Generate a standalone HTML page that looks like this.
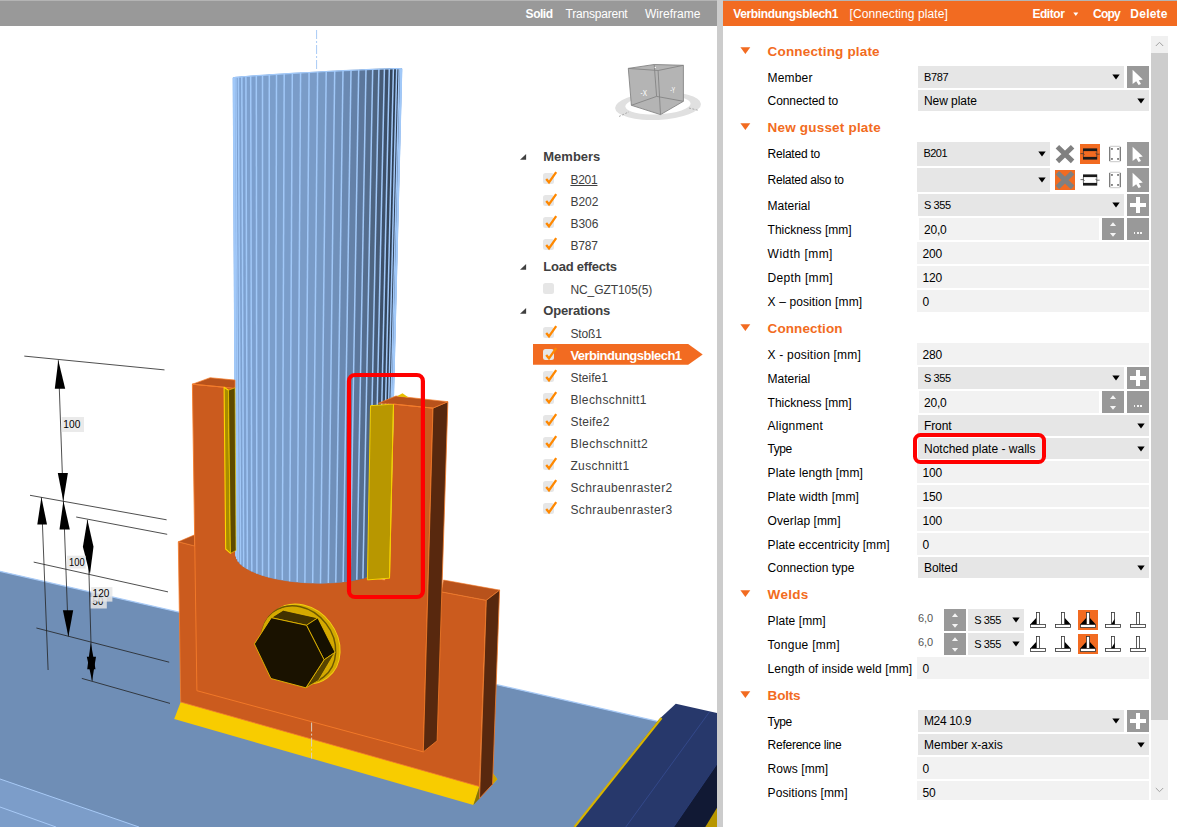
<!DOCTYPE html>
<html lang="en"><head><meta charset="utf-8"><title>Verbindungsblech1 - Connecting plate</title>
<style>
html,body{margin:0;padding:0;background:#fff;}
body{width:1177px;height:827px;position:relative;overflow:hidden;font-family:"Liberation Sans",sans-serif;}
.r{position:absolute;display:block;}
.t{position:absolute;white-space:nowrap;line-height:1;}
.scene{position:absolute;left:0;top:0;}
</style></head><body>
<svg class="scene" width="717" height="827" viewBox="0 0 717 827">
<polygon points="0.0,571.3 665.0,723.1 665.0,827.0 0.0,827.0" fill="#6f8eb6" />
<line x1="0.0" y1="571.3" x2="661.0" y2="722.1" stroke="#a8caf6" stroke-width="1.2" />
<polygon points="0.0,779.0 139.0,827.0 0.0,827.0" fill="#7c9dc9" />
<line x1="0.0" y1="779.0" x2="139.0" y2="827.0" stroke="#a8caf6" stroke-width="1" />
<line x1="0.0" y1="807.0" x2="56.0" y2="827.0" stroke="#a8caf6" stroke-width="1" />
<polygon points="675.8,703.8 717.0,713.0 717.0,827.0 573.8,827.0 659.4,719.1" fill="#27386b" />
<polygon points="717.0,764.0 717.0,827.0 673.7,827.0" fill="#111934" />
<polygon points="717.0,807.8 717.0,827.0 705.3,827.0" fill="#b89600" />
<line x1="709.4" y1="712.0" x2="625.8" y2="827.0" stroke="#33488a" stroke-width="1" />
<line x1="661.5" y1="718.0" x2="574.5" y2="827.0" stroke="#d8b400" stroke-width="2.2" />
<line x1="717.0" y1="764.0" x2="673.7" y2="827.0" stroke="#2c3f78" stroke-width="0.8" />
<polygon points="180.7,702.0 479.1,786.3 492.6,784.2 497.3,779.2 492.6,773.1 480.0,780.0" fill="#f8cc00" />
<polygon points="180.7,702.0 479.6,786.4 473.4,805.1 174.2,719.0" fill="#f8cc00" />
<polygon points="492.6,773.1 497.3,779.2 492.6,784.2" fill="#c9a400" />
<polygon points="479.3,786.5 473.4,805.1 479.5,798.4" fill="#8a7200" />
<polygon points="178.3,541.8 195.0,546.0 441.3,591.8 486.3,600.3 479.3,786.5 180.7,702.0" fill="#cb5b1e" stroke="#f57c2a" stroke-width="0.8" stroke-linejoin="round" />
<polygon points="178.3,541.8 194.6,534.8 194.6,545.9" fill="#b8521b" stroke="#f57c2a" stroke-width="0.6" stroke-linejoin="round" />
<polygon points="443.5,580.0 499.6,590.1 486.3,600.3 441.3,591.8" fill="#b8521b" stroke="#f57c2a" stroke-width="0.6" stroke-linejoin="round" />
<polygon points="486.3,600.3 499.6,590.1 492.6,784.2 479.5,798.4" fill="#58280e" stroke="#f57c2a" stroke-width="0.8" stroke-linejoin="round" />
<polygon points="192.4,384.2 240.0,388.7 240.0,560.0 385.0,580.0 385.0,404.6 393.5,404.1 433.0,408.1 423.3,751.9 196.9,690.7" fill="#cb5b1e" stroke="#f57c2a" stroke-width="0.9" stroke-linejoin="round" />
<polygon points="433.0,408.1 447.9,401.7 437.1,740.8 423.3,751.9" fill="#58280e" stroke="#f57c2a" stroke-width="0.8" stroke-linejoin="round" />
<polygon points="233.4,77.8 233.5,77.7 234.3,77.6 235.9,77.3 238.4,77.1 241.8,76.8 245.9,76.5 250.7,76.1 256.3,75.7 262.5,75.3 269.3,74.8 276.5,74.4 284.2,73.9 292.3,73.4 300.6,72.9 309.1,72.5 317.6,72.0 326.2,71.5 334.7,71.1 343.0,70.7 351.0,70.3 358.7,70.0 366.0,69.6 372.7,69.4 378.9,69.1 384.4,68.9 389.3,68.8 393.4,68.7 396.7,68.6 399.2,68.6 400.8,68.7 401.5,68.8 401.6,68.8 389.2,560.0 389.1,560.9 388.5,563.5 387.0,566.0 384.7,568.4 381.7,570.7 378.0,572.9 373.6,574.9 368.5,576.7 362.9,578.4 356.8,579.8 350.1,581.0 343.1,581.9 335.8,582.6 328.3,583.0 320.5,583.2 312.7,583.1 304.9,582.7 297.2,582.1 289.6,581.2 282.3,580.1 275.3,578.8 268.7,577.2 262.5,575.4 256.9,573.4 251.8,571.3 247.4,569.1 243.6,566.7 240.6,564.2 238.3,561.6 236.8,559.0 236.1,556.4 236.0,555.4" fill="#799bc7" />
<polygon points="233.4,77.8 233.5,77.7 236.1,556.4 236.0,555.4" fill="#7fa3d3" stroke="#7fa3d3" stroke-width="0.6" stroke-linejoin="round" />
<polygon points="233.5,77.7 234.3,77.6 236.8,559.0 236.1,556.4" fill="#7fa2d2" stroke="#7fa2d2" stroke-width="0.6" stroke-linejoin="round" />
<polygon points="234.3,77.6 235.9,77.3 238.3,561.6 236.8,559.0" fill="#7ea2d2" stroke="#7ea2d2" stroke-width="0.6" stroke-linejoin="round" />
<polygon points="235.9,77.3 238.4,77.1 240.6,564.2 238.3,561.6" fill="#7ea1d1" stroke="#7ea1d1" stroke-width="0.6" stroke-linejoin="round" />
<polygon points="238.4,77.1 241.8,76.8 243.6,566.7 240.6,564.2" fill="#7da1d0" stroke="#7da1d0" stroke-width="0.6" stroke-linejoin="round" />
<polygon points="241.8,76.8 245.9,76.5 247.4,569.1 243.6,566.7" fill="#7da0cf" stroke="#7da0cf" stroke-width="0.6" stroke-linejoin="round" />
<polygon points="245.9,76.5 250.7,76.1 251.8,571.3 247.4,569.1" fill="#7da0ce" stroke="#7da0ce" stroke-width="0.6" stroke-linejoin="round" />
<polygon points="250.7,76.1 256.3,75.7 256.9,573.4 251.8,571.3" fill="#7c9fce" stroke="#7c9fce" stroke-width="0.6" stroke-linejoin="round" />
<polygon points="256.3,75.7 262.5,75.3 262.5,575.4 256.9,573.4" fill="#7c9fcd" stroke="#7c9fcd" stroke-width="0.6" stroke-linejoin="round" />
<polygon points="262.5,75.3 269.3,74.8 268.7,577.2 262.5,575.4" fill="#7c9fcc" stroke="#7c9fcc" stroke-width="0.6" stroke-linejoin="round" />
<polygon points="269.3,74.8 276.5,74.4 275.3,578.8 268.7,577.2" fill="#7b9ecb" stroke="#7b9ecb" stroke-width="0.6" stroke-linejoin="round" />
<polygon points="276.5,74.4 284.2,73.9 282.3,580.1 275.3,578.8" fill="#7b9eca" stroke="#7b9eca" stroke-width="0.6" stroke-linejoin="round" />
<polygon points="284.2,73.9 292.3,73.4 289.6,581.2 282.3,580.1" fill="#7a9dca" stroke="#7a9dca" stroke-width="0.6" stroke-linejoin="round" />
<polygon points="292.3,73.4 300.6,72.9 297.2,582.1 289.6,581.2" fill="#7a9cc9" stroke="#7a9cc9" stroke-width="0.6" stroke-linejoin="round" />
<polygon points="300.6,72.9 309.1,72.5 304.9,582.7 297.2,582.1" fill="#7a9cc8" stroke="#7a9cc8" stroke-width="0.6" stroke-linejoin="round" />
<polygon points="309.1,72.5 317.6,72.0 312.7,583.1 304.9,582.7" fill="#799bc7" stroke="#799bc7" stroke-width="0.6" stroke-linejoin="round" />
<polygon points="317.6,72.0 326.2,71.5 320.5,583.2 312.7,583.1" fill="#7799c4" stroke="#7799c4" stroke-width="0.6" stroke-linejoin="round" />
<polygon points="326.2,71.5 334.7,71.1 328.3,583.0 320.5,583.2" fill="#7494bf" stroke="#7494bf" stroke-width="0.6" stroke-linejoin="round" />
<polygon points="334.7,71.1 343.0,70.7 335.8,582.6 328.3,583.0" fill="#7090ba" stroke="#7090ba" stroke-width="0.6" stroke-linejoin="round" />
<polygon points="343.0,70.7 351.0,70.3 343.1,581.9 335.8,582.6" fill="#6a89b2" stroke="#6a89b2" stroke-width="0.6" stroke-linejoin="round" />
<polygon points="351.0,70.3 358.7,70.0 350.1,581.0 343.1,581.9" fill="#6481a8" stroke="#6481a8" stroke-width="0.6" stroke-linejoin="round" />
<polygon points="358.7,70.0 366.0,69.6 356.8,579.8 350.1,581.0" fill="#5c779c" stroke="#5c779c" stroke-width="0.6" stroke-linejoin="round" />
<polygon points="366.0,69.6 372.7,69.4 362.9,578.4 356.8,579.8" fill="#556e8f" stroke="#556e8f" stroke-width="0.6" stroke-linejoin="round" />
<polygon points="372.7,69.4 378.9,69.1 368.5,576.7 362.9,578.4" fill="#4e6582" stroke="#4e6582" stroke-width="0.6" stroke-linejoin="round" />
<polygon points="378.9,69.1 384.4,68.9 373.6,574.9 368.5,576.7" fill="#465b77" stroke="#465b77" stroke-width="0.6" stroke-linejoin="round" />
<polygon points="384.4,68.9 389.3,68.8 378.0,572.9 373.6,574.9" fill="#3d506a" stroke="#3d506a" stroke-width="0.6" stroke-linejoin="round" />
<polygon points="389.3,68.8 393.4,68.7 381.7,570.7 378.0,572.9" fill="#34465d" stroke="#34465d" stroke-width="0.6" stroke-linejoin="round" />
<polygon points="393.4,68.7 396.7,68.6 384.7,568.4 381.7,570.7" fill="#2d3d52" stroke="#2d3d52" stroke-width="0.6" stroke-linejoin="round" />
<polygon points="396.7,68.6 399.2,68.6 387.0,566.0 384.7,568.4" fill="#2d3b50" stroke="#2d3b50" stroke-width="0.6" stroke-linejoin="round" />
<polygon points="399.2,68.6 400.8,68.7 388.5,563.5 387.0,566.0" fill="#3a4b65" stroke="#3a4b65" stroke-width="0.6" stroke-linejoin="round" />
<polygon points="400.8,68.7 401.5,68.8 389.1,560.9 388.5,563.5" fill="#5a7295" stroke="#5a7295" stroke-width="0.6" stroke-linejoin="round" />
<polygon points="401.5,68.8 401.6,68.8 389.2,560.0 389.1,560.9" fill="#7290ba" stroke="#7290ba" stroke-width="0.6" stroke-linejoin="round" />
<line x1="233.4" y1="77.8" x2="236.0" y2="555.4" stroke="#a1c8f8" stroke-width="1.5" />
<line x1="233.5" y1="77.7" x2="236.1" y2="556.4" stroke="#a1c8f8" stroke-width="1.5" />
<line x1="234.3" y1="77.6" x2="236.8" y2="559.0" stroke="#a1c8f8" stroke-width="1.5" />
<line x1="235.9" y1="77.3" x2="238.3" y2="561.6" stroke="#a1c8f8" stroke-width="1.5" />
<line x1="238.4" y1="77.1" x2="240.6" y2="564.2" stroke="#a1c8f8" stroke-width="1.5" />
<line x1="241.8" y1="76.8" x2="243.6" y2="566.7" stroke="#a1c8f8" stroke-width="1.5" />
<line x1="245.9" y1="76.5" x2="247.4" y2="569.1" stroke="#a1c8f8" stroke-width="1.5" />
<line x1="250.7" y1="76.1" x2="251.8" y2="571.3" stroke="#a1c8f8" stroke-width="1.5" />
<line x1="256.3" y1="75.7" x2="256.9" y2="573.4" stroke="#a1c8f8" stroke-width="1.5" />
<line x1="262.5" y1="75.3" x2="262.5" y2="575.4" stroke="#a1c8f8" stroke-width="1.5" />
<line x1="269.3" y1="74.8" x2="268.7" y2="577.2" stroke="#a1c8f8" stroke-width="1.5" />
<line x1="276.5" y1="74.4" x2="275.3" y2="578.8" stroke="#a1c8f8" stroke-width="1.5" />
<line x1="284.2" y1="73.9" x2="282.3" y2="580.1" stroke="#a1c8f8" stroke-width="1.5" />
<line x1="292.3" y1="73.4" x2="289.6" y2="581.2" stroke="#a1c8f8" stroke-width="1.5" />
<line x1="300.6" y1="72.9" x2="297.2" y2="582.1" stroke="#a1c8f8" stroke-width="1.5" />
<line x1="309.1" y1="72.5" x2="304.9" y2="582.7" stroke="#a1c8f8" stroke-width="1.5" />
<line x1="317.6" y1="72.0" x2="312.7" y2="583.1" stroke="#a1c8f8" stroke-width="1.5" />
<line x1="326.2" y1="71.5" x2="320.5" y2="583.2" stroke="#a1c8f8" stroke-width="1.5" />
<line x1="334.7" y1="71.1" x2="328.3" y2="583.0" stroke="#a1c8f8" stroke-width="1.5" />
<line x1="343.0" y1="70.7" x2="335.8" y2="582.6" stroke="#a1c8f8" stroke-width="1.5" />
<line x1="351.0" y1="70.3" x2="343.1" y2="581.9" stroke="#a1c8f8" stroke-width="1.5" />
<line x1="358.7" y1="70.0" x2="350.1" y2="581.0" stroke="#a1c8f8" stroke-width="1.5" />
<line x1="366.0" y1="69.6" x2="356.8" y2="579.8" stroke="#a1c8f8" stroke-width="1.5" />
<line x1="372.7" y1="69.4" x2="362.9" y2="578.4" stroke="#a1c8f8" stroke-width="1.5" />
<line x1="378.9" y1="69.1" x2="368.5" y2="576.7" stroke="#a1c8f8" stroke-width="1.5" />
<line x1="384.4" y1="68.9" x2="373.6" y2="574.9" stroke="#a1c8f8" stroke-width="1.5" />
<line x1="389.3" y1="68.8" x2="378.0" y2="572.9" stroke="#a1c8f8" stroke-width="1.5" />
<line x1="393.4" y1="68.7" x2="381.7" y2="570.7" stroke="#a1c8f8" stroke-width="1.5" />
<line x1="396.7" y1="68.6" x2="384.7" y2="568.4" stroke="#a1c8f8" stroke-width="1.5" />
<line x1="399.2" y1="68.6" x2="387.0" y2="566.0" stroke="#a1c8f8" stroke-width="1.5" />
<line x1="400.8" y1="68.7" x2="388.5" y2="563.5" stroke="#a1c8f8" stroke-width="1.5" />
<line x1="401.5" y1="68.8" x2="389.1" y2="560.9" stroke="#a1c8f8" stroke-width="1.5" />
<line x1="401.6" y1="68.8" x2="389.2" y2="560.0" stroke="#a1c8f8" stroke-width="1.5" />
<polyline points="233.4,77.8 233.5,77.7 234.3,77.6 235.9,77.3 238.4,77.1 241.8,76.8 245.9,76.5 250.7,76.1 256.3,75.7 262.5,75.3 269.3,74.8 276.5,74.4 284.2,73.9 292.3,73.4 300.6,72.9 309.1,72.5 317.6,72.0 326.2,71.5 334.7,71.1 343.0,70.7 351.0,70.3 358.7,70.0 366.0,69.6 372.7,69.4 378.9,69.1 384.4,68.9 389.3,68.8 393.4,68.7 396.7,68.6 399.2,68.6 400.8,68.7 401.5,68.8 401.6,68.8" fill="none" stroke="#a1c8f8" stroke-width="1.2"/>
<polygon points="192.4,384.2 210.1,377.7 235.0,380.1 235.0,388.3 224.1,387.2" fill="#b8521b" stroke="#f57c2a" stroke-width="0.7" stroke-linejoin="round" />
<line x1="192.4" y1="384.2" x2="224.1" y2="387.2" stroke="#f57c2a" stroke-width="1" />
<polygon points="224.1,387.2 228.5,390.2 230.5,553.3 225.7,549.0" fill="#a88c00" stroke="#ffd400" stroke-width="1.1" stroke-linejoin="round" />
<polygon points="228.5,390.2 235.0,387.8 236.0,550.5 230.5,553.3" fill="#5e4a00" stroke="#f4d000" stroke-width="0.6" stroke-linejoin="round" />
<polygon points="370.5,405.7 393.5,404.1 389.5,578.2 367.4,579.9" fill="#b89700" stroke="#f4d000" stroke-width="1" stroke-linejoin="round" />
<polygon points="378.4,403.3 395.9,396.0 447.9,401.7 433.0,408.1 393.5,404.1" fill="#b8521b" stroke="#f57c2a" stroke-width="0.7" stroke-linejoin="round" />
<polygon points="397.0,396.3 402.5,393.2 408.6,397.5" fill="#e8c000" />
<line x1="393.5" y1="404.1" x2="433.0" y2="408.1" stroke="#f57c2a" stroke-width="1" />
<line x1="393.5" y1="404.1" x2="389.5" y2="578.2" stroke="#f4d000" stroke-width="1" />
<ellipse cx="301.9" cy="644" rx="42.4" ry="35.5" transform="rotate(52.6 301.9 644)" fill="#d4a900" stroke="#f2d010" stroke-width="1"/>
<ellipse cx="298.6" cy="644.6" rx="41" ry="34.6" transform="rotate(52.6 298.6 644.6)" fill="#d4a900" stroke="#6e5800" stroke-width="1.5"/>
<ellipse cx="297" cy="644.8" rx="40" ry="33.6" transform="rotate(52.6 297 644.8)" fill="#d4a900"/>
<polygon points="271.3,617.7 283.2,610.2 317.8,617.9 306.5,625.3" fill="#423200" stroke="#e4b800" stroke-width="0.8" stroke-linejoin="round" />
<polygon points="306.5,625.3 317.8,617.9 335.1,652.3 324.1,659.8" fill="#151000" stroke="#e4b800" stroke-width="0.8" stroke-linejoin="round" />
<polygon points="324.1,659.8 335.1,652.3 318.5,680.5 305.9,687.8" fill="#574400" stroke="#e4b800" stroke-width="0.8" stroke-linejoin="round" />
<polygon points="254.4,643.9 271.3,617.7 306.5,625.3 324.1,659.8 305.9,687.8 270.9,678.5" fill="#1a1200" stroke="#e4b800" stroke-width="0.9" stroke-linejoin="round" />
<line x1="316.6" y1="30.0" x2="316.6" y2="71.0" stroke="#a8caf6" stroke-width="1" stroke-dasharray="9 2 2 2"/>
<line x1="311.6" y1="722.6" x2="311.6" y2="758.6" stroke="#d8d0c0" stroke-width="1" stroke-dasharray="9 2 2 2"/>
<rect x="349" y="375" width="73.9" height="222" rx="6" ry="6" fill="none" stroke="#ff0000" stroke-width="4.2"/>
<line x1="24.3" y1="356.1" x2="164.5" y2="369.9" stroke="#222" stroke-width="0.8" />
<line x1="30.0" y1="495.3" x2="166.6" y2="519.8" stroke="#222" stroke-width="0.8" />
<line x1="76.2" y1="517.0" x2="167.2" y2="534.3" stroke="#222" stroke-width="0.8" />
<line x1="33.7" y1="562.1" x2="168.0" y2="591.9" stroke="#222" stroke-width="0.8" />
<line x1="36.4" y1="628.0" x2="169.2" y2="662.2" stroke="#222" stroke-width="0.8" />
<line x1="81.8" y1="678.4" x2="170.0" y2="703.4" stroke="#222" stroke-width="0.8" />
<line x1="58.3" y1="360.2" x2="63.3" y2="500.9" stroke="#222" stroke-width="0.8" />
<line x1="41.4" y1="497.3" x2="48.1" y2="670.0" stroke="#222" stroke-width="0.8" />
<line x1="63.4" y1="500.9" x2="68.4" y2="636.4" stroke="#222" stroke-width="0.8" />
<line x1="87.4" y1="519.8" x2="92.1" y2="680.9" stroke="#222" stroke-width="0.8" />
<polygon points="58.3,360.2 54.8,388.7 65.2,388.7" fill="#000" />
<polygon points="63.3,500.9 57.8,472.9 67.9,472.9" fill="#000" />
<polygon points="41.4,497.3 37.3,524.5 47.0,524.5" fill="#000" />
<polygon points="63.4,500.9 59.5,529.5 69.8,529.5" fill="#000" />
<polygon points="68.4,636.4 62.9,610.2 73.2,610.2" fill="#000" />
<polygon points="87.4,519.8 82.9,546.8 89.9,574.6 93.5,546.8" fill="#000" />
<polygon points="90.8,642.8 87.2,669.2 95.5,669.2" fill="#000" />
<polygon points="92.1,680.9 86.8,656.7 96.0,656.7" fill="#000" />
<rect x="61.7" y="417" width="22.3" height="15" fill="#e6e6e6" fill-opacity="0.85"/>
<text x="63.3" y="428" font-family="Liberation Sans, sans-serif" font-size="11" fill="#000" textLength="17" lengthAdjust="spacingAndGlyphs">100</text>
<rect x="67" y="555.7" width="18.7" height="12.8" fill="#e6e6e6" fill-opacity="0.85"/>
<text x="69" y="565.7" font-family="Liberation Sans, sans-serif" font-size="11" fill="#000" textLength="15.6" lengthAdjust="spacingAndGlyphs">100</text>
<rect x="90.7" y="596.9" width="16.1" height="11.6" fill="#e6e6e6" fill-opacity="0.85"/>
<text x="92.6" y="604.7" font-family="Liberation Sans, sans-serif" font-size="11" fill="#000" textLength="10.6" lengthAdjust="spacingAndGlyphs">50</text>
<rect x="91.2" y="587.1" width="21.2" height="14.5" fill="#e6e6e6" fill-opacity="0.85"/>
<text x="92.6" y="597.4" font-family="Liberation Sans, sans-serif" font-size="11" fill="#000" textLength="16.7" lengthAdjust="spacingAndGlyphs">120</text>
<path transform="rotate(-2.8 658 106)" fill-rule="evenodd" fill="#e0e0e0" d="M615,106 a43,13.9 0 1,0 86,0 a43,13.9 0 1,0 -86,0 Z M625.3,105 a32.7,9.4 0 1,0 65.4,0 a32.7,9.4 0 1,0 -65.4,0 Z"/>
<polygon points="628.3,68.4 654.2,64.5 683.4,65.3 683.4,101.3 660.5,114.6 631.4,105.3" fill="#b4b4b4" stroke="#858585" stroke-width="0.9" stroke-linejoin="round" />
<line x1="628.3" y1="68.4" x2="658.1" y2="70.5" stroke="#858585" stroke-width="0.9" />
<line x1="658.1" y1="70.5" x2="683.4" y2="65.3" stroke="#858585" stroke-width="0.9" />
<line x1="658.1" y1="70.5" x2="660.5" y2="114.6" stroke="#858585" stroke-width="0.9" />
<line x1="654.2" y1="64.5" x2="656.6" y2="96.4" stroke="#858585" stroke-width="0.9" />
<line x1="656.6" y1="96.4" x2="631.4" y2="105.3" stroke="#858585" stroke-width="0.9" />
<line x1="656.6" y1="96.4" x2="683.4" y2="101.3" stroke="#858585" stroke-width="0.9" />
<text x="640.6" y="95.6" font-family="Liberation Sans, sans-serif" font-size="8.5" fill="#fff" textLength="6.4" lengthAdjust="spacingAndGlyphs">-X</text>
<text x="670.2" y="92.8" font-family="Liberation Sans, sans-serif" font-size="8.5" fill="#fff" textLength="5" lengthAdjust="spacingAndGlyphs">-Y</text>
<circle cx="655.3" cy="67.4" r="0.7" fill="#fff"/>
<line x1="619.0" y1="116.5" x2="629.0" y2="111.8" stroke="#999" stroke-width="0.8" stroke-dasharray="2 1.5"/>
<line x1="689.0" y1="108.0" x2="699.0" y2="110.5" stroke="#999" stroke-width="0.8" stroke-dasharray="2 1.5"/>
</svg>
<div class="r" style="left:0.0px;top:0.0px;width:717.0px;height:26.0px;background:#999999;"></div>
<div class="r" style="left:0.0px;top:0.0px;width:1177.0px;height:1.0px;background:#b4b4b4;"></div>
<div class="r" style="left:717.0px;top:0.0px;width:6.0px;height:827.0px;background:#cccccc;"></div>
<div class="r" style="left:723.0px;top:1.0px;width:454.0px;height:25.0px;background:#f26b21;"></div>
<svg class="r" style="left:1073.0px;top:12.0px" width="6" height="5" viewBox="0 0 6 5"><polygon points="0.3,0.5 5.3,0.5 2.8,4" fill="#fff"/></svg>
<svg class="r" style="left:520.0px;top:153.3px" width="7" height="7" viewBox="0 0 7 7"><polygon points="0,6.7 6.1,0.9 6.1,6.7" fill="#404040"/></svg>
<div class="r" style="left:543.2px;top:173.2px;width:10.8px;height:10.8px;background:#e6e6e6;border-radius:2.5px"></div>
<svg class="r" style="left:543.0px;top:171.1px" width="15" height="15" viewBox="0 0 15 15"><polyline points="3.2,7.9 6,11.3 13.2,1.1" fill="none" stroke="#ff8800" stroke-width="2.3" stroke-linejoin="miter"/></svg>
<div class="r" style="left:543.2px;top:195.2px;width:10.8px;height:10.8px;background:#e6e6e6;border-radius:2.5px"></div>
<svg class="r" style="left:543.0px;top:193.1px" width="15" height="15" viewBox="0 0 15 15"><polyline points="3.2,7.9 6,11.3 13.2,1.1" fill="none" stroke="#ff8800" stroke-width="2.3" stroke-linejoin="miter"/></svg>
<div class="r" style="left:543.2px;top:217.2px;width:10.8px;height:10.8px;background:#e6e6e6;border-radius:2.5px"></div>
<svg class="r" style="left:543.0px;top:215.1px" width="15" height="15" viewBox="0 0 15 15"><polyline points="3.2,7.9 6,11.3 13.2,1.1" fill="none" stroke="#ff8800" stroke-width="2.3" stroke-linejoin="miter"/></svg>
<div class="r" style="left:543.2px;top:239.2px;width:10.8px;height:10.8px;background:#e6e6e6;border-radius:2.5px"></div>
<svg class="r" style="left:543.0px;top:237.1px" width="15" height="15" viewBox="0 0 15 15"><polyline points="3.2,7.9 6,11.3 13.2,1.1" fill="none" stroke="#ff8800" stroke-width="2.3" stroke-linejoin="miter"/></svg>
<svg class="r" style="left:520.0px;top:263.2px" width="7" height="7" viewBox="0 0 7 7"><polygon points="0,6.7 6.1,0.9 6.1,6.7" fill="#404040"/></svg>
<div class="r" style="left:543.2px;top:283.2px;width:10.8px;height:10.8px;background:#e6e6e6;border-radius:2.5px"></div>
<svg class="r" style="left:520.0px;top:307.2px" width="7" height="7" viewBox="0 0 7 7"><polygon points="0,6.7 6.1,0.9 6.1,6.7" fill="#404040"/></svg>
<div class="r" style="left:543.2px;top:327.2px;width:10.8px;height:10.8px;background:#e6e6e6;border-radius:2.5px"></div>
<svg class="r" style="left:543.0px;top:325.1px" width="15" height="15" viewBox="0 0 15 15"><polyline points="3.2,7.9 6,11.3 13.2,1.1" fill="none" stroke="#ff8800" stroke-width="2.3" stroke-linejoin="miter"/></svg>
<svg class="r" style="left:532.8px;top:343.7px" width="170" height="21" viewBox="0 0 170 21"><polygon points="0,0 155.2,0 169.7,10.4 155.2,20.8 0,20.8" fill="#f26b21"/></svg>
<div class="r" style="left:543.2px;top:349.2px;width:10.8px;height:10.8px;background:#e6e6e6;border-radius:2.5px"></div>
<svg class="r" style="left:543.0px;top:347.1px" width="15" height="15" viewBox="0 0 15 15"><polyline points="3.2,7.9 6,11.3 13.2,1.1" fill="none" stroke="#ff8800" stroke-width="2.3" stroke-linejoin="miter"/></svg>
<div class="r" style="left:543.2px;top:371.2px;width:10.8px;height:10.8px;background:#e6e6e6;border-radius:2.5px"></div>
<svg class="r" style="left:543.0px;top:369.1px" width="15" height="15" viewBox="0 0 15 15"><polyline points="3.2,7.9 6,11.3 13.2,1.1" fill="none" stroke="#ff8800" stroke-width="2.3" stroke-linejoin="miter"/></svg>
<div class="r" style="left:543.2px;top:393.2px;width:10.8px;height:10.8px;background:#e6e6e6;border-radius:2.5px"></div>
<svg class="r" style="left:543.0px;top:391.1px" width="15" height="15" viewBox="0 0 15 15"><polyline points="3.2,7.9 6,11.3 13.2,1.1" fill="none" stroke="#ff8800" stroke-width="2.3" stroke-linejoin="miter"/></svg>
<div class="r" style="left:543.2px;top:415.2px;width:10.8px;height:10.8px;background:#e6e6e6;border-radius:2.5px"></div>
<svg class="r" style="left:543.0px;top:413.1px" width="15" height="15" viewBox="0 0 15 15"><polyline points="3.2,7.9 6,11.3 13.2,1.1" fill="none" stroke="#ff8800" stroke-width="2.3" stroke-linejoin="miter"/></svg>
<div class="r" style="left:543.2px;top:437.2px;width:10.8px;height:10.8px;background:#e6e6e6;border-radius:2.5px"></div>
<svg class="r" style="left:543.0px;top:435.1px" width="15" height="15" viewBox="0 0 15 15"><polyline points="3.2,7.9 6,11.3 13.2,1.1" fill="none" stroke="#ff8800" stroke-width="2.3" stroke-linejoin="miter"/></svg>
<div class="r" style="left:543.2px;top:459.2px;width:10.8px;height:10.8px;background:#e6e6e6;border-radius:2.5px"></div>
<svg class="r" style="left:543.0px;top:457.1px" width="15" height="15" viewBox="0 0 15 15"><polyline points="3.2,7.9 6,11.3 13.2,1.1" fill="none" stroke="#ff8800" stroke-width="2.3" stroke-linejoin="miter"/></svg>
<div class="r" style="left:543.2px;top:481.2px;width:10.8px;height:10.8px;background:#e6e6e6;border-radius:2.5px"></div>
<svg class="r" style="left:543.0px;top:479.1px" width="15" height="15" viewBox="0 0 15 15"><polyline points="3.2,7.9 6,11.3 13.2,1.1" fill="none" stroke="#ff8800" stroke-width="2.3" stroke-linejoin="miter"/></svg>
<div class="r" style="left:543.2px;top:503.2px;width:10.8px;height:10.8px;background:#e6e6e6;border-radius:2.5px"></div>
<svg class="r" style="left:543.0px;top:501.1px" width="15" height="15" viewBox="0 0 15 15"><polyline points="3.2,7.9 6,11.3 13.2,1.1" fill="none" stroke="#ff8800" stroke-width="2.3" stroke-linejoin="miter"/></svg>
<svg class="r" style="left:739.5px;top:46.9px" width="11" height="8" viewBox="0 0 11 8"><polygon points="0.4,0.2 10.3,0.2 5.35,7" fill="#f26b21"/></svg>
<div class="r" style="left:918.0px;top:66.0px;width:206.0px;height:22.0px;background:#e6e6e6;"></div>
<svg class="r" style="left:1111.6px;top:74.4px" width="8" height="6" viewBox="0 0 8 6"><polygon points="0.3,0.5 7.7,0.5 4,5.5" fill="#000"/></svg>
<div class="r" style="left:1127.0px;top:66.0px;width:22.0px;height:22.0px;background:#999999;"></div>
<svg class="r" style="left:1131.0px;top:68.0px" width="14" height="18" viewBox="0 0 14 18"><polygon points="1.6,1.7 1.6,15.9 5.2,13.2 7.6,17.1 10,15.9 7.8,12.3 11.8,11.4" fill="#fff"/></svg>
<div class="r" style="left:918.0px;top:90.0px;width:231.0px;height:21.0px;background:#e6e6e6;"></div>
<svg class="r" style="left:1136.6px;top:97.9px" width="8" height="6" viewBox="0 0 8 6"><polygon points="0.3,0.5 7.7,0.5 4,5.5" fill="#000"/></svg>
<svg class="r" style="left:739.5px;top:122.9px" width="11" height="8" viewBox="0 0 11 8"><polygon points="0.4,0.2 10.3,0.2 5.35,7" fill="#f26b21"/></svg>
<div class="r" style="left:917.0px;top:142.0px;width:133.0px;height:24.0px;background:#e6e6e6;"></div>
<svg class="r" style="left:1037.6px;top:151.3px" width="8" height="6" viewBox="0 0 8 6"><polygon points="0.3,0.5 7.7,0.5 4,5.5" fill="#000"/></svg>
<svg class="r" style="left:1055.0px;top:144.0px" width="20" height="20" viewBox="0 0 20 20"><path d="M2.4,2.7 L17.6,17.4 M17.6,2.7 L2.4,17.4" stroke="#808080" stroke-width="5" fill="none"/></svg>
<div class="r" style="left:1080.0px;top:144.0px;width:20.0px;height:20.0px;background:#f26b21;"></div>
<svg class="r" style="left:1080.0px;top:144.0px" width="20" height="20" viewBox="0 0 20 20"><rect x="3" y="4.4" width="14.2" height="2.7" fill="#1a1a1a"/><rect x="3" y="12.9" width="14.2" height="2.7" fill="#1a1a1a"/><path d="M0.5,9.6 H3.2 L4.6,10.6 M19.6,10.2 H17 L15.4,9.2 M3.4,7 V13 M16.8,7 V13" stroke="#333" stroke-width="0.7" fill="none"/></svg>
<svg class="r" style="left:1108.0px;top:144.8px" width="14" height="18" viewBox="0 0 14 18"><rect x="1.5" y="1.3" width="11" height="15.4" rx="1" fill="#fff" stroke="#b0b0b0" stroke-width="0.7"/><path d="M1.7,2 V16 M12.3,2 V16" stroke="#7a7a7a" stroke-width="1.3" fill="none"/><rect x="3.1" y="3.1" width="1.7" height="1.7" fill="#666"/><rect x="9.2" y="3.1" width="1.7" height="1.7" fill="#666"/><rect x="3.1" y="13.1" width="1.7" height="1.7" fill="#666"/><rect x="9.2" y="13.1" width="1.7" height="1.7" fill="#666"/></svg>
<div class="r" style="left:1127.0px;top:142.0px;width:22.0px;height:24.0px;background:#999999;"></div>
<svg class="r" style="left:1131.0px;top:145.0px" width="14" height="18" viewBox="0 0 14 18"><polygon points="1.6,1.7 1.6,15.9 5.2,13.2 7.6,17.1 10,15.9 7.8,12.3 11.8,11.4" fill="#fff"/></svg>
<div class="r" style="left:917.0px;top:168.0px;width:133.0px;height:24.0px;background:#e6e6e6;"></div>
<svg class="r" style="left:1037.6px;top:177.3px" width="8" height="6" viewBox="0 0 8 6"><polygon points="0.3,0.5 7.7,0.5 4,5.5" fill="#000"/></svg>
<div class="r" style="left:1055.0px;top:170.0px;width:20.0px;height:20.0px;background:#f26b21;"></div>
<svg class="r" style="left:1055.0px;top:170.0px" width="20" height="20" viewBox="0 0 20 20"><path d="M2.4,2.7 L17.6,17.4 M17.6,2.7 L2.4,17.4" stroke="#808080" stroke-width="5" fill="none"/></svg>
<svg class="r" style="left:1080.0px;top:170.0px" width="20" height="20" viewBox="0 0 20 20"><rect x="3" y="4.6" width="14.2" height="11" fill="#fff"/><rect x="3" y="4.4" width="14.2" height="2.7" fill="#1a1a1a"/><rect x="3" y="12.9" width="14.2" height="2.7" fill="#1a1a1a"/><path d="M0.5,9.6 H3.2 L4.6,10.6 M19.6,10.2 H17 L15.4,9.2 M3.4,7 V13 M16.8,7 V13" stroke="#333" stroke-width="0.7" fill="none"/></svg>
<svg class="r" style="left:1108.0px;top:170.8px" width="14" height="18" viewBox="0 0 14 18"><rect x="1.5" y="1.3" width="11" height="15.4" rx="1" fill="#fff" stroke="#b0b0b0" stroke-width="0.7"/><path d="M1.7,2 V16 M12.3,2 V16" stroke="#7a7a7a" stroke-width="1.3" fill="none"/><rect x="3.1" y="3.1" width="1.7" height="1.7" fill="#666"/><rect x="9.2" y="3.1" width="1.7" height="1.7" fill="#666"/><rect x="3.1" y="13.1" width="1.7" height="1.7" fill="#666"/><rect x="9.2" y="13.1" width="1.7" height="1.7" fill="#666"/></svg>
<div class="r" style="left:1127.0px;top:168.0px;width:22.0px;height:24.0px;background:#999999;"></div>
<svg class="r" style="left:1131.0px;top:171.0px" width="14" height="18" viewBox="0 0 14 18"><polygon points="1.6,1.7 1.6,15.9 5.2,13.2 7.6,17.1 10,15.9 7.8,12.3 11.8,11.4" fill="#fff"/></svg>
<div class="r" style="left:918.0px;top:194.0px;width:206.0px;height:22.0px;background:#e6e6e6;"></div>
<svg class="r" style="left:1111.6px;top:202.4px" width="8" height="6" viewBox="0 0 8 6"><polygon points="0.3,0.5 7.7,0.5 4,5.5" fill="#000"/></svg>
<div class="r" style="left:1127.0px;top:194.0px;width:22.0px;height:22.0px;background:#999999;"></div>
<div class="r" style="left:1136.0px;top:197.0px;width:4.0px;height:16.0px;background:#fff;"></div>
<div class="r" style="left:1130.0px;top:203.0px;width:16.0px;height:4.0px;background:#fff;"></div>
<div class="r" style="left:919.0px;top:218.0px;width:180.0px;height:22.0px;background:#f2f2f2;"></div>
<div class="r" style="left:1102.0px;top:218.0px;width:22.0px;height:22.0px;background:#999999;"></div>
<svg class="r" style="left:1109.0px;top:221.0px" width="8" height="16" viewBox="0 0 8 16"><polygon points="0.9,5 7.1,5 4,1.2" fill="#f4f4f4"/><polygon points="0.9,11.9 7.1,11.9 4,15.7" fill="#f4f4f4"/></svg>
<div class="r" style="left:1127.0px;top:218.0px;width:22.0px;height:22.0px;background:#999999;"></div>
<div class="r" style="left:1134.2px;top:232.0px;width:1.3px;height:2.0px;background:#f4f4f4;"></div>
<div class="r" style="left:1137.3px;top:232.0px;width:1.3px;height:2.0px;background:#f4f4f4;"></div>
<div class="r" style="left:1140.4px;top:232.0px;width:1.3px;height:2.0px;background:#f4f4f4;"></div>
<div class="r" style="left:917.0px;top:242.0px;width:232.0px;height:22.0px;background:#f2f2f2;"></div>
<div class="r" style="left:917.0px;top:266.0px;width:232.0px;height:22.0px;background:#f2f2f2;"></div>
<div class="r" style="left:917.0px;top:290.0px;width:232.0px;height:22.0px;background:#f2f2f2;"></div>
<svg class="r" style="left:739.5px;top:323.9px" width="11" height="8" viewBox="0 0 11 8"><polygon points="0.4,0.2 10.3,0.2 5.35,7" fill="#f26b21"/></svg>
<div class="r" style="left:917.0px;top:343.0px;width:232.0px;height:22.0px;background:#f2f2f2;"></div>
<div class="r" style="left:918.0px;top:367.0px;width:206.0px;height:22.0px;background:#e6e6e6;"></div>
<svg class="r" style="left:1111.6px;top:375.4px" width="8" height="6" viewBox="0 0 8 6"><polygon points="0.3,0.5 7.7,0.5 4,5.5" fill="#000"/></svg>
<div class="r" style="left:1127.0px;top:367.0px;width:22.0px;height:22.0px;background:#999999;"></div>
<div class="r" style="left:1136.0px;top:370.0px;width:4.0px;height:16.0px;background:#fff;"></div>
<div class="r" style="left:1130.0px;top:376.0px;width:16.0px;height:4.0px;background:#fff;"></div>
<div class="r" style="left:919.0px;top:391.0px;width:180.0px;height:22.0px;background:#f2f2f2;"></div>
<div class="r" style="left:1102.0px;top:391.0px;width:22.0px;height:22.0px;background:#999999;"></div>
<svg class="r" style="left:1109.0px;top:394.0px" width="8" height="16" viewBox="0 0 8 16"><polygon points="0.9,5 7.1,5 4,1.2" fill="#f4f4f4"/><polygon points="0.9,11.9 7.1,11.9 4,15.7" fill="#f4f4f4"/></svg>
<div class="r" style="left:1127.0px;top:391.0px;width:22.0px;height:22.0px;background:#999999;"></div>
<div class="r" style="left:1134.2px;top:405.0px;width:1.3px;height:2.0px;background:#f4f4f4;"></div>
<div class="r" style="left:1137.3px;top:405.0px;width:1.3px;height:2.0px;background:#f4f4f4;"></div>
<div class="r" style="left:1140.4px;top:405.0px;width:1.3px;height:2.0px;background:#f4f4f4;"></div>
<div class="r" style="left:918.0px;top:415.0px;width:231.0px;height:21.0px;background:#e6e6e6;"></div>
<svg class="r" style="left:1136.6px;top:422.9px" width="8" height="6" viewBox="0 0 8 6"><polygon points="0.3,0.5 7.7,0.5 4,5.5" fill="#000"/></svg>
<div class="r" style="left:918.0px;top:438.0px;width:231.0px;height:21.0px;background:#e6e6e6;"></div>
<svg class="r" style="left:1136.6px;top:445.9px" width="8" height="6" viewBox="0 0 8 6"><polygon points="0.3,0.5 7.7,0.5 4,5.5" fill="#000"/></svg>
<div class="r" style="left:917.0px;top:461.0px;width:232.0px;height:22.0px;background:#f2f2f2;"></div>
<div class="r" style="left:917.0px;top:485.0px;width:232.0px;height:22.0px;background:#f2f2f2;"></div>
<div class="r" style="left:917.0px;top:509.0px;width:232.0px;height:22.0px;background:#f2f2f2;"></div>
<div class="r" style="left:917.0px;top:533.0px;width:232.0px;height:22.0px;background:#f2f2f2;"></div>
<div class="r" style="left:918.0px;top:557.0px;width:231.0px;height:21.0px;background:#e6e6e6;"></div>
<svg class="r" style="left:1136.6px;top:564.9px" width="8" height="6" viewBox="0 0 8 6"><polygon points="0.3,0.5 7.7,0.5 4,5.5" fill="#000"/></svg>
<div class="r" style="left:912.7px;top:433px;width:125.4px;height:22.9px;border:4px solid #ff0000;border-radius:7.5px"></div>
<svg class="r" style="left:739.5px;top:589.9px" width="11" height="8" viewBox="0 0 11 8"><polygon points="0.4,0.2 10.3,0.2 5.35,7" fill="#f26b21"/></svg>
<div class="r" style="left:944.0px;top:609.0px;width:22.0px;height:22.0px;background:#999999;"></div>
<svg class="r" style="left:951.0px;top:612.0px" width="8" height="16" viewBox="0 0 8 16"><polygon points="0.9,5 7.1,5 4,1.2" fill="#f4f4f4"/><polygon points="0.9,11.9 7.1,11.9 4,15.7" fill="#f4f4f4"/></svg>
<div class="r" style="left:968.0px;top:609.0px;width:56.0px;height:22.0px;background:#e6e6e6;"></div>
<svg class="r" style="left:1011.5px;top:616.7px" width="8" height="6" viewBox="0 0 8 6"><polygon points="0.3,0.5 7.7,0.5 4,5.5" fill="#000"/></svg>
<svg class="r" style="left:1028.0px;top:610.0px" width="20" height="20" viewBox="0 0 20 20"><rect x="8.5" y="2.5" width="3" height="12" fill="#fff" stroke="#333" stroke-width="0.8"/><rect x="2.5" y="14.5" width="15" height="3" fill="#fff" stroke="#333" stroke-width="0.8"/><polygon points="2.4,14.3 8.1,8 8.1,14.3" fill="#000"/></svg>
<svg class="r" style="left:1053.0px;top:610.0px" width="20" height="20" viewBox="0 0 20 20"><rect x="8.5" y="2.5" width="3" height="12" fill="#fff" stroke="#333" stroke-width="0.8"/><rect x="2.5" y="14.5" width="15" height="3" fill="#fff" stroke="#333" stroke-width="0.8"/><polygon points="17.6,14.3 11.9,8 11.9,14.3" fill="#000"/></svg>
<div class="r" style="left:1078.0px;top:610.0px;width:20.0px;height:20.0px;background:#f26b21;"></div>
<svg class="r" style="left:1078.0px;top:610.0px" width="20" height="20" viewBox="0 0 20 20"><rect x="8.5" y="2.5" width="3" height="12" fill="#fff" stroke="#333" stroke-width="0.8"/><rect x="2.5" y="14.5" width="15" height="3" fill="#fff" stroke="#333" stroke-width="0.8"/><polygon points="2.4,14.3 8.1,8 8.1,14.3" fill="#000"/><polygon points="17.6,14.3 11.9,8 11.9,14.3" fill="#000"/></svg>
<svg class="r" style="left:1103.0px;top:610.0px" width="20" height="20" viewBox="0 0 20 20"><rect x="8.5" y="2.5" width="3" height="12" fill="#fff" stroke="#333" stroke-width="0.8"/><rect x="2.5" y="14.5" width="15" height="3" fill="#fff" stroke="#333" stroke-width="0.8"/><polygon points="11.7,8.8 11.7,14.2 8.3,14.2" fill="#000"/></svg>
<svg class="r" style="left:1128.0px;top:610.0px" width="20" height="20" viewBox="0 0 20 20"><rect x="8.5" y="2.5" width="3" height="12" fill="#fff" stroke="#333" stroke-width="0.8"/><rect x="2.5" y="14.5" width="15" height="3" fill="#fff" stroke="#333" stroke-width="0.8"/></svg>
<div class="r" style="left:944.0px;top:633.0px;width:22.0px;height:22.0px;background:#999999;"></div>
<svg class="r" style="left:951.0px;top:636.0px" width="8" height="16" viewBox="0 0 8 16"><polygon points="0.9,5 7.1,5 4,1.2" fill="#f4f4f4"/><polygon points="0.9,11.9 7.1,11.9 4,15.7" fill="#f4f4f4"/></svg>
<div class="r" style="left:968.0px;top:633.0px;width:56.0px;height:22.0px;background:#e6e6e6;"></div>
<svg class="r" style="left:1011.5px;top:640.7px" width="8" height="6" viewBox="0 0 8 6"><polygon points="0.3,0.5 7.7,0.5 4,5.5" fill="#000"/></svg>
<svg class="r" style="left:1028.0px;top:634.0px" width="20" height="20" viewBox="0 0 20 20"><rect x="8.5" y="2.5" width="3" height="12" fill="#fff" stroke="#333" stroke-width="0.8"/><rect x="2.5" y="14.5" width="15" height="3" fill="#fff" stroke="#333" stroke-width="0.8"/><polygon points="2.4,14.3 8.1,8 8.1,14.3" fill="#000"/></svg>
<svg class="r" style="left:1053.0px;top:634.0px" width="20" height="20" viewBox="0 0 20 20"><rect x="8.5" y="2.5" width="3" height="12" fill="#fff" stroke="#333" stroke-width="0.8"/><rect x="2.5" y="14.5" width="15" height="3" fill="#fff" stroke="#333" stroke-width="0.8"/><polygon points="17.6,14.3 11.9,8 11.9,14.3" fill="#000"/></svg>
<div class="r" style="left:1078.0px;top:634.0px;width:20.0px;height:20.0px;background:#f26b21;"></div>
<svg class="r" style="left:1078.0px;top:634.0px" width="20" height="20" viewBox="0 0 20 20"><rect x="8.5" y="2.5" width="3" height="12" fill="#fff" stroke="#333" stroke-width="0.8"/><rect x="2.5" y="14.5" width="15" height="3" fill="#fff" stroke="#333" stroke-width="0.8"/><polygon points="2.4,14.3 8.1,8 8.1,14.3" fill="#000"/><polygon points="17.6,14.3 11.9,8 11.9,14.3" fill="#000"/></svg>
<svg class="r" style="left:1103.0px;top:634.0px" width="20" height="20" viewBox="0 0 20 20"><rect x="8.5" y="2.5" width="3" height="12" fill="#fff" stroke="#333" stroke-width="0.8"/><rect x="2.5" y="14.5" width="15" height="3" fill="#fff" stroke="#333" stroke-width="0.8"/><polygon points="11.7,8.8 11.7,14.2 8.3,14.2" fill="#000"/></svg>
<svg class="r" style="left:1128.0px;top:634.0px" width="20" height="20" viewBox="0 0 20 20"><rect x="8.5" y="2.5" width="3" height="12" fill="#fff" stroke="#333" stroke-width="0.8"/><rect x="2.5" y="14.5" width="15" height="3" fill="#fff" stroke="#333" stroke-width="0.8"/></svg>
<div class="r" style="left:917.0px;top:657.0px;width:232.0px;height:22.0px;background:#f2f2f2;"></div>
<svg class="r" style="left:739.5px;top:690.9px" width="11" height="8" viewBox="0 0 11 8"><polygon points="0.4,0.2 10.3,0.2 5.35,7" fill="#f26b21"/></svg>
<div class="r" style="left:918.0px;top:710.0px;width:206.0px;height:22.0px;background:#e6e6e6;"></div>
<svg class="r" style="left:1111.6px;top:718.4px" width="8" height="6" viewBox="0 0 8 6"><polygon points="0.3,0.5 7.7,0.5 4,5.5" fill="#000"/></svg>
<div class="r" style="left:1127.0px;top:710.0px;width:22.0px;height:22.0px;background:#999999;"></div>
<div class="r" style="left:1136.0px;top:713.0px;width:4.0px;height:16.0px;background:#fff;"></div>
<div class="r" style="left:1130.0px;top:719.0px;width:16.0px;height:4.0px;background:#fff;"></div>
<div class="r" style="left:918.0px;top:734.0px;width:231.0px;height:21.0px;background:#e6e6e6;"></div>
<svg class="r" style="left:1136.6px;top:741.9px" width="8" height="6" viewBox="0 0 8 6"><polygon points="0.3,0.5 7.7,0.5 4,5.5" fill="#000"/></svg>
<div class="r" style="left:917.0px;top:757.0px;width:232.0px;height:22.0px;background:#f2f2f2;"></div>
<div class="r" style="left:917.0px;top:781.0px;width:232.0px;height:22.0px;background:#f2f2f2;"></div>
<div class="r" style="left:723.0px;top:800.0px;width:454.0px;height:27.0px;background:#ffffff;"></div>
<div class="r" style="left:1151.0px;top:36.0px;width:17.0px;height:764.0px;background:#f0f0f0;"></div>
<div class="r" style="left:1151.0px;top:53.0px;width:17.0px;height:666.5px;background:#cdcdcd;"></div>
<svg class="r" style="left:1155.0px;top:41.0px" width="9" height="6" viewBox="0 0 9 6"><polyline points="0.8,5 4.5,1.3 8.2,5" fill="none" stroke="#a0a0a0" stroke-width="1"/></svg>
<svg class="r" style="left:1155.0px;top:787.0px" width="9" height="6" viewBox="0 0 9 6"><polyline points="0.8,1 4.5,4.7 8.2,1" fill="none" stroke="#a0a0a0" stroke-width="1"/></svg>
<span class="t" style="left:525.6px;top:8.01px;font-size:12px;color:#fff;font-weight:700;letter-spacing:-0.469px;">Solid</span>
<span class="t" style="left:565.5px;top:8.01px;font-size:12px;color:#fff;letter-spacing:-0.206px;">Transparent</span>
<span class="t" style="left:645.0px;top:8.01px;font-size:12px;color:#fff;letter-spacing:0.017px;">Wireframe</span>
<span class="t" style="left:733.2px;top:8.01px;font-size:12px;color:#fff;font-weight:700;letter-spacing:-0.335px;">Verbindungsblech1</span>
<span class="t" style="left:849.5px;top:8.01px;font-size:12px;color:#fff;letter-spacing:0.098px;">[Connecting plate]</span>
<span class="t" style="left:1032.4px;top:8.01px;font-size:12px;color:#fff;font-weight:700;letter-spacing:-0.445px;">Editor</span>
<span class="t" style="left:1093.0px;top:8.01px;font-size:12px;color:#fff;font-weight:700;letter-spacing:-0.750px;">Copy</span>
<span class="t" style="left:1130.3px;top:8.01px;font-size:12px;color:#fff;font-weight:700;letter-spacing:0.245px;">Delete</span>
<span class="t" style="left:543.3px;top:150.40px;font-size:13px;color:#404040;font-weight:700;letter-spacing:-0.011px;">Members</span>
<span class="t" style="left:570.4px;top:174.10px;font-size:12px;color:#404040;letter-spacing:-0.233px;text-decoration:underline;">B201</span>
<span class="t" style="left:570.4px;top:196.10px;font-size:12px;color:#404040;letter-spacing:-0.008px;">B202</span>
<span class="t" style="left:570.4px;top:218.10px;font-size:12px;color:#404040;letter-spacing:-0.008px;">B306</span>
<span class="t" style="left:570.4px;top:240.10px;font-size:12px;color:#404040;letter-spacing:-0.133px;">B787</span>
<span class="t" style="left:543.3px;top:260.30px;font-size:13px;color:#404040;font-weight:700;letter-spacing:-0.257px;">Load effects</span>
<span class="t" style="left:570.4px;top:284.10px;font-size:12px;color:#404040;letter-spacing:-0.074px;">NC_GZT105(5)</span>
<span class="t" style="left:543.3px;top:304.30px;font-size:13px;color:#404040;font-weight:700;letter-spacing:-0.183px;">Operations</span>
<span class="t" style="left:570.4px;top:328.10px;font-size:12px;color:#404040;letter-spacing:-0.123px;">Stoß1</span>
<span class="t" style="left:570.4px;top:349.10px;font-size:13px;color:#fff;font-weight:700;letter-spacing:-0.513px;">Verbindungsblech1</span>
<span class="t" style="left:570.4px;top:372.10px;font-size:12px;color:#404040;letter-spacing:0.020px;">Steife1</span>
<span class="t" style="left:570.4px;top:394.10px;font-size:12px;color:#404040;letter-spacing:0.394px;">Blechschnitt1</span>
<span class="t" style="left:570.4px;top:416.10px;font-size:12px;color:#404040;letter-spacing:0.263px;">Steife2</span>
<span class="t" style="left:570.4px;top:438.10px;font-size:12px;color:#404040;letter-spacing:0.494px;">Blechschnitt2</span>
<span class="t" style="left:570.4px;top:460.10px;font-size:12px;color:#404040;letter-spacing:0.384px;">Zuschnitt1</span>
<span class="t" style="left:570.4px;top:482.10px;font-size:12px;color:#404040;letter-spacing:0.432px;">Schraubenraster2</span>
<span class="t" style="left:570.4px;top:504.10px;font-size:12px;color:#404040;letter-spacing:0.432px;">Schraubenraster3</span>
<span class="t" style="left:767.6px;top:45.01px;font-size:13.5px;color:#f26b21;font-weight:700;letter-spacing:0.168px;">Connecting plate</span>
<span class="t" style="left:767.6px;top:72.01px;font-size:12px;color:#000;letter-spacing:0.164px;">Member</span>
<span class="t" style="left:924.0px;top:72.00px;font-size:11px;color:#000;letter-spacing:-0.376px;">B787</span>
<span class="t" style="left:767.6px;top:95.01px;font-size:12px;color:#000;letter-spacing:-0.083px;">Connected to</span>
<span class="t" style="left:924.0px;top:95.01px;font-size:12px;color:#000;letter-spacing:-0.064px;">New plate</span>
<span class="t" style="left:767.6px;top:121.01px;font-size:13.5px;color:#f26b21;font-weight:700;letter-spacing:0.189px;">New gusset plate</span>
<span class="t" style="left:767.6px;top:148.01px;font-size:12px;color:#000;letter-spacing:-0.230px;">Related to</span>
<span class="t" style="left:923.4px;top:148.00px;font-size:11px;color:#000;letter-spacing:-0.526px;">B201</span>
<span class="t" style="left:767.6px;top:174.01px;font-size:12px;color:#000;letter-spacing:-0.257px;">Related also to</span>
<span class="t" style="left:767.6px;top:200.01px;font-size:12px;color:#000;letter-spacing:-0.011px;">Material</span>
<span class="t" style="left:924.0px;top:200.00px;font-size:11px;color:#000;letter-spacing:-0.430px;">S 355</span>
<span class="t" style="left:767.6px;top:224.01px;font-size:12px;color:#000;letter-spacing:-0.001px;">Thickness [mm]</span>
<span class="t" style="left:924.0px;top:224.01px;font-size:12px;color:#000;letter-spacing:-0.215px;">20,0</span>
<span class="t" style="left:767.6px;top:248.01px;font-size:12px;color:#000;letter-spacing:0.463px;">Width [mm]</span>
<span class="t" style="left:922.6px;top:248.01px;font-size:12px;color:#000;letter-spacing:-0.210px;">200</span>
<span class="t" style="left:767.6px;top:272.01px;font-size:12px;color:#000;letter-spacing:0.328px;">Depth [mm]</span>
<span class="t" style="left:922.6px;top:272.01px;font-size:12px;color:#000;letter-spacing:-0.210px;">120</span>
<span class="t" style="left:767.6px;top:296.01px;font-size:12px;color:#000;letter-spacing:0.112px;">X – position [mm]</span>
<span class="t" style="left:922.6px;top:296.01px;font-size:12px;color:#000;letter-spacing:-0.188px;">0</span>
<span class="t" style="left:767.6px;top:322.01px;font-size:13.5px;color:#f26b21;font-weight:700;letter-spacing:0.075px;">Connection</span>
<span class="t" style="left:767.6px;top:349.01px;font-size:12px;color:#000;letter-spacing:0.198px;">X - position [mm]</span>
<span class="t" style="left:922.6px;top:349.01px;font-size:12px;color:#000;letter-spacing:-0.210px;">280</span>
<span class="t" style="left:767.6px;top:373.01px;font-size:12px;color:#000;letter-spacing:-0.011px;">Material</span>
<span class="t" style="left:924.0px;top:373.00px;font-size:11px;color:#000;letter-spacing:-0.430px;">S 355</span>
<span class="t" style="left:767.6px;top:397.01px;font-size:12px;color:#000;letter-spacing:-0.001px;">Thickness [mm]</span>
<span class="t" style="left:924.0px;top:397.01px;font-size:12px;color:#000;letter-spacing:-0.215px;">20,0</span>
<span class="t" style="left:767.6px;top:420.01px;font-size:12px;color:#000;letter-spacing:0.236px;">Alignment</span>
<span class="t" style="left:924.0px;top:420.01px;font-size:12px;color:#000;letter-spacing:-0.103px;">Front</span>
<span class="t" style="left:767.6px;top:443.01px;font-size:12px;color:#000;letter-spacing:-0.454px;">Type</span>
<span class="t" style="left:924.0px;top:443.01px;font-size:12px;color:#000;letter-spacing:0.005px;">Notched plate - walls</span>
<span class="t" style="left:767.6px;top:467.01px;font-size:12px;color:#000;letter-spacing:0.119px;">Plate length [mm]</span>
<span class="t" style="left:922.6px;top:467.01px;font-size:12px;color:#000;letter-spacing:-0.210px;">100</span>
<span class="t" style="left:767.6px;top:491.01px;font-size:12px;color:#000;letter-spacing:0.175px;">Plate width [mm]</span>
<span class="t" style="left:922.6px;top:491.01px;font-size:12px;color:#000;letter-spacing:-0.210px;">150</span>
<span class="t" style="left:767.6px;top:515.01px;font-size:12px;color:#000;letter-spacing:0.082px;">Overlap [mm]</span>
<span class="t" style="left:922.6px;top:515.01px;font-size:12px;color:#000;letter-spacing:-0.210px;">100</span>
<span class="t" style="left:767.6px;top:539.01px;font-size:12px;color:#000;letter-spacing:0.056px;">Plate eccentricity [mm]</span>
<span class="t" style="left:922.6px;top:539.01px;font-size:12px;color:#000;letter-spacing:-0.188px;">0</span>
<span class="t" style="left:767.6px;top:562.01px;font-size:12px;color:#000;letter-spacing:0.004px;">Connection type</span>
<span class="t" style="left:924.0px;top:562.01px;font-size:12px;color:#000;letter-spacing:-0.089px;">Bolted</span>
<span class="t" style="left:767.6px;top:588.01px;font-size:13.5px;color:#f26b21;font-weight:700;letter-spacing:0.297px;">Welds</span>
<span class="t" style="left:767.6px;top:615.01px;font-size:12px;color:#000;letter-spacing:0.084px;">Plate [mm]</span>
<span class="t" style="left:917.9px;top:613.41px;font-size:11px;color:#555;letter-spacing:-0.032px;">6,0</span>
<span class="t" style="left:974.3px;top:615.00px;font-size:11px;color:#000;letter-spacing:-0.430px;">S 355</span>
<span class="t" style="left:767.6px;top:639.01px;font-size:12px;color:#000;letter-spacing:0.266px;">Tongue [mm]</span>
<span class="t" style="left:917.9px;top:637.41px;font-size:11px;color:#555;letter-spacing:-0.032px;">6,0</span>
<span class="t" style="left:974.3px;top:639.00px;font-size:11px;color:#000;letter-spacing:-0.430px;">S 355</span>
<span class="t" style="left:767.6px;top:663.01px;font-size:12px;color:#000;letter-spacing:0.071px;">Length of inside weld [mm]</span>
<span class="t" style="left:922.6px;top:663.01px;font-size:12px;color:#000;letter-spacing:-0.188px;">0</span>
<span class="t" style="left:767.6px;top:689.01px;font-size:13.5px;color:#f26b21;font-weight:700;letter-spacing:-0.190px;">Bolts</span>
<span class="t" style="left:767.6px;top:716.01px;font-size:12px;color:#000;letter-spacing:-0.454px;">Type</span>
<span class="t" style="left:924.0px;top:715.01px;font-size:12px;color:#000;letter-spacing:-0.381px;">M24 10.9</span>
<span class="t" style="left:767.6px;top:739.01px;font-size:12px;color:#000;letter-spacing:-0.256px;">Reference line</span>
<span class="t" style="left:924.0px;top:739.01px;font-size:12px;color:#000;letter-spacing:0.001px;">Member x-axis</span>
<span class="t" style="left:767.6px;top:763.01px;font-size:12px;color:#000;letter-spacing:0.067px;">Rows [mm]</span>
<span class="t" style="left:922.6px;top:763.01px;font-size:12px;color:#000;letter-spacing:-0.188px;">0</span>
<span class="t" style="left:767.6px;top:787.01px;font-size:12px;color:#000;letter-spacing:0.094px;">Positions [mm]</span>
<span class="t" style="left:922.6px;top:787.01px;font-size:12px;color:#000;letter-spacing:-0.180px;">50</span>
</body></html>
